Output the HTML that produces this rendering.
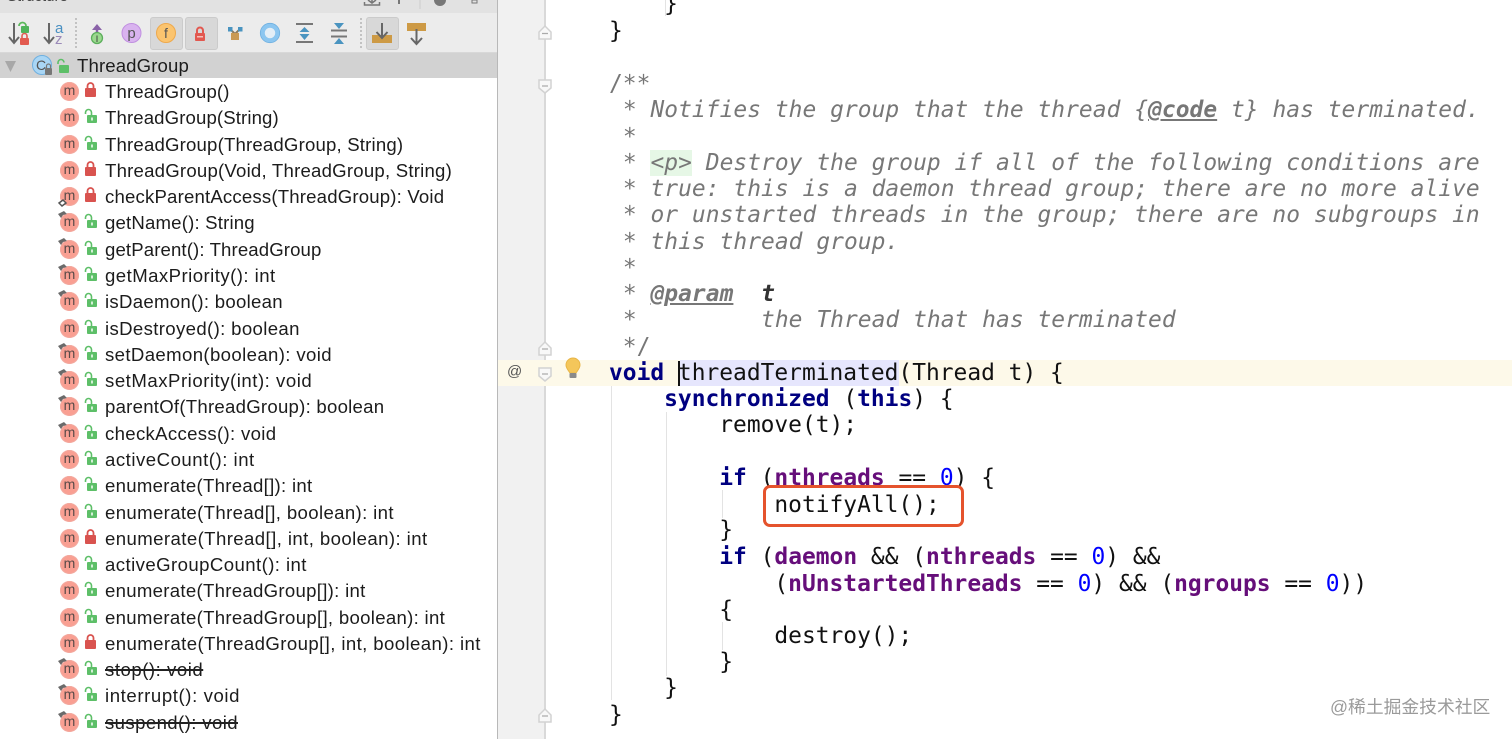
<!DOCTYPE html>
<html><head><meta charset="utf-8"><style>
html,body{margin:0;padding:0;width:1512px;height:739px;overflow:hidden;background:#fff}
.a{position:absolute}
#left{position:absolute;left:0;top:0;width:497px;height:739px;overflow:hidden;background:#fff}
#tree{position:absolute;left:0;top:78px;width:497px;font:18.6px/26.29px "Liberation Sans",sans-serif;color:#1c1c1c}
.r{position:relative;height:26.29px;white-space:nowrap}
.r b{font-weight:400;position:absolute;left:105px;top:1px;letter-spacing:.12px}
.r s{text-decoration-thickness:1.5px;text-decoration-color:#222}
.m{position:absolute;left:60px;top:4px;width:19px;height:19px;border-radius:50%;background:#f99f92;border:0;color:#5a4a48;font:14px/17px "Liberation Sans",sans-serif;text-align:center;box-shadow:inset 0 0 0 1px #f2a99f}
.r svg{position:absolute;left:0;top:0;width:110px;height:27px;pointer-events:none}
#code{position:absolute;left:609px;top:0;font:22.9px/26.25px "DejaVu Sans Mono",monospace;color:#111;white-space:pre}
#code div{position:absolute;left:0;height:26.25px}
.c{color:#777;font-style:italic;letter-spacing:.04px}
.cs{color:#777}
.k{color:#000080;font-weight:700}
.f{color:#660e7a;font-weight:700}
.n{color:#0000ff}
.g{position:absolute;width:1px;background:#e3e3e3}
</style></head><body>
<div id="left">
 <div class="a" style="left:0;top:0;width:497px;height:13px;background:#e2e2e2;overflow:hidden">
  <span class="a" style="left:7px;top:-13px;font:15px/20px 'Liberation Sans',sans-serif;color:#444">Structure</span>
  <svg class="a" style="left:360px;top:0" width="130" height="13"><path d="M4.500 2v3h15V2M12 0v3M8 0l4 3 4-3" stroke="#777" stroke-width="1.500" fill="none"/><path d="M39 0v4" stroke="#777" stroke-width="2"/><path d="M60 0v9" stroke="#ccc"/><circle cx="80" cy="0" r="6" fill="#777"/><rect x="112" y="0" width="5" height="3" fill="none" stroke="#777"/></svg>
 </div>
 <div class="a" style="left:0;top:13px;width:497px;height:39px;background:#ececec;border-bottom:1px solid #d8d8d8"></div>
 <div class="a" style="left:150px;top:17px;width:31px;height:31px;background:#d8d8d8;border:1px solid #cbcbcb;border-radius:3px"></div>
 <div class="a" style="left:185px;top:17px;width:31px;height:31px;background:#d8d8d8;border:1px solid #cbcbcb;border-radius:3px"></div>
 <div class="a" style="left:366px;top:17px;width:31px;height:31px;background:#d8d8d8;border:1px solid #cbcbcb;border-radius:3px"></div>
 <svg class="a" style="left:0;top:13px" width="497" height="40" fill="none">
  <g stroke="#666" stroke-width="2"><path d="M14 10v19M9 24l5 6 5-6"/><path d="M49 10v19M44 24l5 6 5-6"/></g>
  <path d="M19 13a3.500 3.500 0 0 1 7 0" stroke="#5cb85c" stroke-width="1.700"/><rect x="21" y="13" width="8" height="7" rx="1" fill="#4fb45a"/>
  <rect x="20" y="25" width="9" height="7" rx="1" fill="#e25a4f"/><path d="M22 25v-2a2.500 2.500 0 0 1 5 0v2" stroke="#e25a4f" stroke-width="1.600"/>
  <text x="55" y="20" font-family="Liberation Sans" font-size="15" fill="#4a90c2">a</text><text x="55" y="31" font-family="Liberation Sans" font-size="15" fill="#9a8ab8">z</text>
  <path d="M76 5v31" stroke="#999" stroke-width="1" stroke-dasharray="2 2"/>
  <path d="M361 5v31" stroke="#999" stroke-dasharray="2 2"/>
  <path d="M97 11l-5 6h10z" fill="#8a62a8"/><path d="M97 15v8" stroke="#8a62a8" stroke-width="2.500"/><circle cx="97" cy="25" r="5.500" fill="#9ad98e" stroke="#5cae5c" stroke-width="1.300"/><text x="97" y="29" text-anchor="middle" font-family="Liberation Sans" font-size="9" fill="#333">I</text>
  <circle cx="131.500" cy="20" r="9.500" fill="#d9b3ef" stroke="#c08fe0"/><text x="131.500" y="25" text-anchor="middle" font-family="Liberation Sans" font-size="15" fill="#555">p</text>
  <circle cx="166" cy="20" r="9.500" fill="#fbc46f" stroke="#eea94c"/><text x="166" y="25" text-anchor="middle" font-family="Liberation Sans" font-size="14" fill="#555">f</text>
  <rect x="195" y="20" width="10" height="8" rx="1" fill="#e2584f"/><path d="M197 20v-2.500a3 3 0 0 1 6 0V20" stroke="#e2584f" stroke-width="2"/><rect x="197" y="23" width="6" height="1.500" fill="#f6c0ba"/>
  <path d="M230 16l5 5 5-5" stroke="#8d7a5a" stroke-width="2"/><rect x="228" y="14" width="4.500" height="4.500" fill="#4a94c0"/><rect x="238" y="14" width="4.500" height="4.500" fill="#4a94c0"/><rect x="231" y="20" width="8" height="7" fill="#c99a55"/>
  <circle cx="270" cy="20" r="7.500" stroke="#8cc6f0" stroke-width="4.500" fill="#e4eef6"/><circle cx="270" cy="20" r="9.700" stroke="#6fb0e0" stroke-width=".8"/>
  <path d="M296 11h17M296 29h17" stroke="#777" stroke-width="2"/><path d="M304.500 14l-5 5h10z M304.500 27l-5-6h10z" fill="#4a94c0"/>
  <path d="M331 17.500h16M331 23.500h16" stroke="#777" stroke-width="2"/><path d="M339 16l-5-6h10z M339 25l-5 6h10z" fill="#4a94c0"/>
  <rect x="372" y="22" width="20" height="8" fill="#cd9a45"/><path d="M382 10v14M376.500 19l5.500 6 5.500-6" stroke="#666" stroke-width="2"/>
  <rect x="407" y="10" width="19" height="8" fill="#cd9a45"/><path d="M416.500 16v14M411 25l5.500 6 5.500-6" stroke="#666" stroke-width="2"/>
 </svg>
 <div class="a" style="left:0;top:53px;width:497px;height:25px;background:#d2d2d2"></div>
 <svg class="a" style="left:0;top:53px" width="100" height="25" fill="none">
  <path d="M5 8h11l-5.500 11z" fill="#a8a8a8"/>
  <circle cx="42" cy="12" r="9.500" fill="#a9d6f5" stroke="#6fb0e0"/><text x="41" y="17" text-anchor="middle" font-family="Liberation Sans" font-size="14" fill="#555">C</text>
  <rect x="45" y="15" width="7" height="7" rx="1" fill="#777"/><path d="M46.500 15v-2a2 2 0 0 1 4 0v2" stroke="#777" stroke-width="1.200"/>
  <rect x="59" y="12" width="10" height="8" rx="1" fill="#5dbf68"/><path d="M58 11V9.500a3 3 0 0 1 6 0" stroke="#5dbf68" stroke-width="1.600"/>
 </svg>
 <span class="a" style="left:77px;top:53px;font:18.6px/25px 'Liberation Sans',sans-serif;color:#1c1c1c;letter-spacing:.12px">ThreadGroup</span>
 <div id="tree">
  <div class="r"><span class="m">m</span><svg><use href="#red"/></svg><b>ThreadGroup()</b></div>
  <div class="r"><span class="m">m</span><svg><use href="#grn"/></svg><b>ThreadGroup(String)</b></div>
  <div class="r"><span class="m">m</span><svg><use href="#grn"/></svg><b style="letter-spacing:.18px">ThreadGroup(ThreadGroup, String)</b></div>
  <div class="r"><span class="m">m</span><svg><use href="#red"/></svg><b style="letter-spacing:.22px">ThreadGroup(Void, ThreadGroup, String)</b></div>
  <div class="r"><span class="m">m</span><svg><use href="#red"/><path d="M59 20l4-3 3 3-4 3z" fill="#fff" stroke="#555" stroke-width="1.500"/></svg><b style="letter-spacing:.18px">checkParentAccess(ThreadGroup): Void</b></div>
  <div class="r"><span class="m">m</span><svg><use href="#pin"/><use href="#grn"/></svg><b style="letter-spacing:.18px">getName(): String</b></div>
  <div class="r"><span class="m">m</span><svg><use href="#pin"/><use href="#grn"/></svg><b>getParent(): ThreadGroup</b></div>
  <div class="r"><span class="m">m</span><svg><use href="#pin"/><use href="#grn"/></svg><b style="letter-spacing:.45px">getMaxPriority(): int</b></div>
  <div class="r"><span class="m">m</span><svg><use href="#pin"/><use href="#grn"/></svg><b style="letter-spacing:.28px">isDaemon(): boolean</b></div>
  <div class="r"><span class="m">m</span><svg><use href="#grn"/></svg><b style="letter-spacing:.35px">isDestroyed(): boolean</b></div>
  <div class="r"><span class="m">m</span><svg><use href="#pin"/><use href="#grn"/></svg><b style="letter-spacing:.37px">setDaemon(boolean): void</b></div>
  <div class="r"><span class="m">m</span><svg><use href="#pin"/><use href="#grn"/></svg><b style="letter-spacing:.52px">setMaxPriority(int): void</b></div>
  <div class="r"><span class="m">m</span><svg><use href="#pin"/><use href="#grn"/></svg><b style="letter-spacing:.25px">parentOf(ThreadGroup): boolean</b></div>
  <div class="r"><span class="m">m</span><svg><use href="#pin"/><use href="#grn"/></svg><b style="letter-spacing:.32px">checkAccess(): void</b></div>
  <div class="r"><span class="m">m</span><svg><use href="#grn"/></svg><b style="letter-spacing:.51px">activeCount(): int</b></div>
  <div class="r"><span class="m">m</span><svg><use href="#grn"/></svg><b style="letter-spacing:.29px">enumerate(Thread[]): int</b></div>
  <div class="r"><span class="m">m</span><svg><use href="#grn"/></svg><b style="letter-spacing:.36px">enumerate(Thread[], boolean): int</b></div>
  <div class="r"><span class="m">m</span><svg><use href="#red"/></svg><b style="letter-spacing:.41px">enumerate(Thread[], int, boolean): int</b></div>
  <div class="r"><span class="m">m</span><svg><use href="#grn"/></svg><b style="letter-spacing:.42px">activeGroupCount(): int</b></div>
  <div class="r"><span class="m">m</span><svg><use href="#grn"/></svg><b style="letter-spacing:.29px">enumerate(ThreadGroup[]): int</b></div>
  <div class="r"><span class="m">m</span><svg><use href="#grn"/></svg><b style="letter-spacing:.3px">enumerate(ThreadGroup[], boolean): int</b></div>
  <div class="r"><span class="m">m</span><svg><use href="#red"/></svg><b style="letter-spacing:.4px">enumerate(ThreadGroup[], int, boolean): int</b></div>
  <div class="r"><span class="m">m</span><svg><use href="#pin"/><use href="#grn"/></svg><b style="letter-spacing:.52px"><s>stop(): void</s></b></div>
  <div class="r"><span class="m">m</span><svg><use href="#pin"/><use href="#grn"/></svg><b style="letter-spacing:.59px">interrupt(): void</b></div>
  <div class="r"><span class="m">m</span><svg><use href="#pin"/><use href="#grn"/></svg><b style="letter-spacing:.39px"><s>suspend(): void</s></b></div>
 </div>
</div>
<svg width="0" height="0" style="position:absolute"><defs>
 <g id="red" fill="none"><rect x="85" y="10" width="11" height="9" rx="1" fill="#d9534f"/><path d="M87.500 10V8a3 3 0 0 1 6 0v2" stroke="#d9534f" stroke-width="1.800"/></g>
 <g id="grn" fill="none"><rect x="87" y="11" width="10" height="8" rx="1" fill="#5dbf68"/><path d="M85.500 10V8.500a3 3 0 0 1 6 0V11" stroke="#5dbf68" stroke-width="1.600"/><rect x="91" y="13.500" width="2" height="3" fill="#d5f0d8"/></g>
 <g id="pin"><path d="M58 5l6-3 3 3-4 1-2 3z" fill="#6a6a6a"/></g>
</defs></svg>
<div class="a" style="left:497px;top:0;width:1px;height:739px;background:#b8b8b8"></div>
<div class="a" style="left:498px;top:0;width:46px;height:739px;background:#f1f1f1"></div>
<div class="a" style="left:544px;top:0;width:2px;height:739px;background:#d9d9d9"></div>
<div class="a" style="left:498px;top:360px;width:1014px;height:26px;background:#fdf9e9"></div>
<div class="a" style="left:680px;top:360px;width:219px;height:26px;background:#e6e6fd"></div>
<div class="a" style="left:650px;top:150px;width:42px;height:26px;background:#e6f7e6"></div>
<div class="g" style="left:665px;top:0;height:16px"></div>
<div class="g" style="left:611px;top:386px;height:314px"></div>
<div class="g" style="left:666px;top:412px;height:264px"></div>
<div class="g" style="left:722px;top:490px;height:28px"></div>
<div class="g" style="left:722px;top:622px;height:28px"></div>
<div id="code">
<div style="top:-9px">    }</div>
<div style="top:17.500px">}</div>
<div style="top:71px" class="cs">/**</div>
<div style="top:97.300px" class="c"> * Notifies the group that the thread {<span style="font-weight:700;text-decoration:underline">@code</span> t} has terminated.</div>
<div style="top:123.500px" class="c"> *</div>
<div style="top:149.800px" class="c"> * &lt;p&gt; Destroy the group if all of the following conditions are</div>
<div style="top:176px" class="c"> * true: this is a daemon thread group; there are no more alive</div>
<div style="top:202.300px" class="c"> * or unstarted threads in the group; there are no subgroups in</div>
<div style="top:228.500px" class="c"> * this thread group.</div>
<div style="top:254.800px" class="c"> *</div>
<div style="top:281px" class="c"> * <span style="font-weight:700;text-decoration:underline">@param</span>  <span style="font-weight:700;color:#333">t</span></div>
<div style="top:307.300px" class="c"> *         the Thread that has terminated</div>
<div style="top:333.500px" class="cs"> */</div>
<div style="top:359.500px"><span class="k">void</span> threadTerminated(Thread t) {</div>
<div style="top:386px">    <span class="k">synchronized</span> (<span class="k">this</span>) {</div>
<div style="top:412.300px">        remove(t);</div>
<div style="top:465px">        <span class="k">if</span> (<span class="f">nthreads</span> == <span class="n">0</span>) {</div>
</div>
<div class="a" style="left:763px;top:485px;width:195px;height:36px;background:#fff;border:3px solid #e5532d;border-radius:7px"></div>
<div id="code2" style="position:absolute;left:609px;top:0;font:22.9px/26.25px 'DejaVu Sans Mono',monospace;color:#111;white-space:pre">
<div class="a" style="left:0;top:491.500px">            notifyAll();</div>
<div class="a" style="left:0;top:517px">        }</div>
<div class="a" style="left:0;top:544.300px">        <span class="k">if</span> (<span class="f">daemon</span> &amp;&amp; (<span class="f">nthreads</span> == <span class="n">0</span>) &amp;&amp;</div>
<div class="a" style="left:0;top:570.500px">            (<span class="f">nUnstartedThreads</span> == <span class="n">0</span>) &amp;&amp; (<span class="f">ngroups</span> == <span class="n">0</span>))</div>
<div class="a" style="left:0;top:596.500px">        {</div>
<div class="a" style="left:0;top:623px">            destroy();</div>
<div class="a" style="left:0;top:649px">        }</div>
<div class="a" style="left:0;top:675.300px">    }</div>
<div class="a" style="left:0;top:701.500px">}</div>
</div>
<div class="a" style="left:678px;top:361px;width:2px;height:25px;background:#111"></div>
<svg class="a" style="left:498px;top:0" width="90" height="739" fill="none">
 <g fill="#f8f8f8" stroke="#d2d2d2" stroke-width="1.500">
  <path d="M41 39v-7l6-6 6 6v7z"/>
  <path d="M41 80h12v8l-6 5-6-5z"/>
  <path d="M41 355v-7l6-6 6 6v7z"/>
  <path d="M41 368h12v8l-6 5-6-5z"/>
  <path d="M41 722v-7l6-6 6 6v7z"/>
 </g>
 <path d="M44 33.500h6M44 86h6M44 349h6M44 374h6M44 716h6" stroke="#aaa" stroke-width="1.200"/>
 <path d="M72 373c-2-3-4-5-4-8a7 7 0 0 1 14 0c0 3-2 5-4 8z" fill="#f4c65a" stroke="#e8b547"/>
 <rect x="71.500" y="373" width="7" height="5" rx="1" fill="#8a8a8a"/>
</svg>
<span class="a" style="left:507px;top:363px;font:15px/18px 'Liberation Sans',sans-serif;color:#555">@</span>
<span class="a" style="left:1330px;top:696px;font:17.800px/22px 'Liberation Sans','Noto Sans CJK SC',sans-serif;color:#9a9a9a">@稀土掘金技术社区</span>
</body></html>
